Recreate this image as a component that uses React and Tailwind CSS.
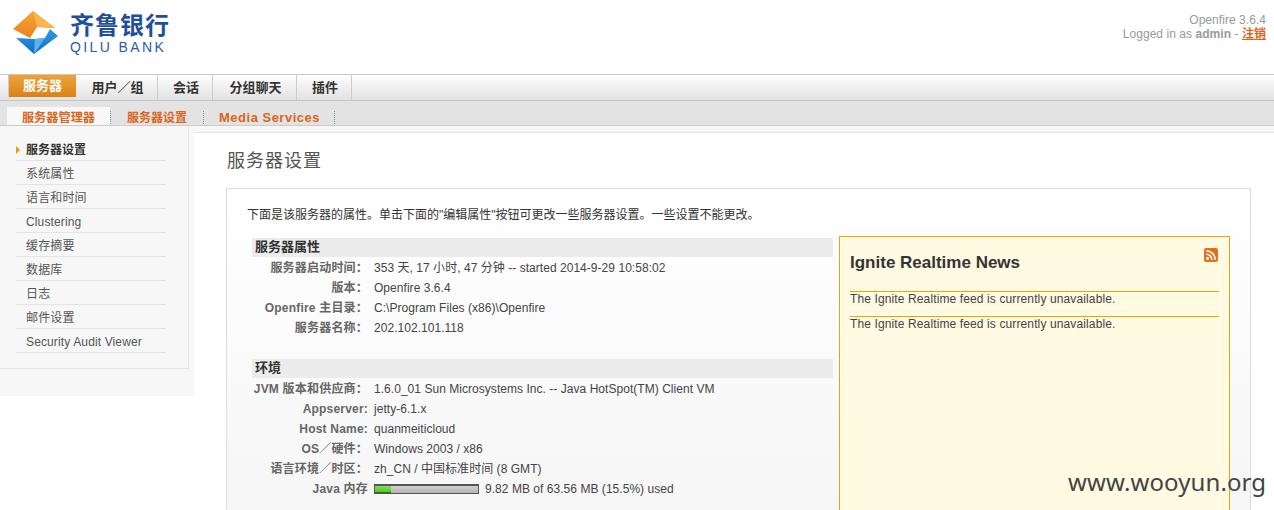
const CJK = { fontFamily: '"Liberation Sans","Noto Sans CJK SC",sans-serif' };

function Logo() {
  return (
    <svg width="46" height="44" viewBox="0 0 46 44" className="shrink-0">
      <defs>
        <linearGradient id="o" x1="0" y1="0" x2="0" y2="1">
          <stop offset="0" stopColor="#f4a93c" />
          <stop offset="1" stopColor="#ec7f1e" />
        </linearGradient>
        <linearGradient id="b" x1="0" y1="0" x2="0" y2="1">
          <stop offset="0" stopColor="#2f9ce6" />
          <stop offset="1" stopColor="#0f6cc0" />
        </linearGradient>
      </defs>
      <path d="M20 0 L42 17 L24 16 L17 27 L0 18 Z" fill="url(#o)" />
      <path d="M20 0 L42 17 L24 16 Z" fill="#f9b54a" />
      <path d="M3 27 L22 28 L32 27 L37 18 L45 25 L21 43 Z" fill="url(#b)" />
      <path d="M22 28 L32 27 L21 43 Z" fill="#56b4ee" />
    </svg>
  );
}

function Rss() {
  return (
    <svg width="14" height="14" viewBox="0 0 14 14" className="-mt-px">
      <rect x="0" y="0" width="14" height="14" rx="2" fill="#e2711d" />
      <circle cx="3.6" cy="10.5" r="1.4" fill="#fff" />
      <path d="M2.4 6.2 A5.4 5.4 0 0 1 7.8 11.8 M2.4 2.9 A8.7 8.7 0 0 1 11.1 11.8" fill="none" stroke="#fff" strokeWidth="1.6" />
    </svg>
  );
}

const tabs = [
  ['用户／组', 'w-[82px]'],
  ['会话', 'w-[55px]'],
  ['分组聊天', 'w-[84px]'],
  ['插件', 'w-[55px]'],
];

const side = ['系统属性', '语言和时间', 'Clustering', '缓存摘要', '数据库', '日志', '邮件设置', 'Security Audit Viewer'];

function Row({ label, children }) {
  return (
    <div className="flex h-5 items-center">
      <div className="w-[116px] shrink-0 text-right font-bold tracking-[0.2px] whitespace-nowrap text-[#666]">{label}</div>
      <div className="ml-1.5 whitespace-nowrap tracking-[0.04px] text-[#444]">{children}</div>
    </div>
  );
}

function SectionHead({ children }) {
  return <div className="mb-px h-[19px] bg-[#ececec] pl-[3px] text-[13px] leading-[18px] font-bold text-[#333]">{children}</div>;
}

export default function App() {
  return (
    <div className="relative h-[510px] w-[1274px] overflow-hidden bg-white text-xs" style={CJK}>
      <header className="flex h-[74px] justify-between">
        <div className="flex pt-[11px] pl-[13px]">
          <Logo />
          <div className="pl-[11px]">
            <div className="text-[24px] leading-[30px] font-bold tracking-[1px] whitespace-nowrap text-[#1f4f9c]">齐鲁银行</div>
            <div className="-mt-[1px] text-[14px] leading-[14px] tracking-[2.4px] whitespace-nowrap text-[#2a5ca8]">QILU BANK</div>
          </div>
        </div>
        <div className="pt-[13px] pr-2 text-right leading-[14px] tracking-[0.05px] text-[#999]">
          <div>Openfire 3.6.4</div>
          <div>
            Logged in as <b>admin</b> - <a className="font-bold text-[#d9661c] underline">注销</a>
          </div>
        </div>
      </header>

      <nav className="flex h-[27px] border-y border-y-[#c6c6c6] bg-gradient-to-b from-[#fefefe] to-[#e2e2e2] pl-2">
        <div className="flex h-[22px] w-[68px] items-center justify-center border-l border-l-[#ccc] bg-gradient-to-b from-[#eca43a] to-[#da8214] text-[13px] font-bold text-white">服务器</div>
        {tabs.map(([t, w]) => (
          <div key={t} className={`flex h-[25px] items-center justify-center border-r border-r-[#ccc] pl-[2px] text-[13px] font-bold text-[#333] ${w}`}>{t}</div>
        ))}
      </nav>

      <div className="flex h-[25px] items-end border-b border-b-[#ccc] bg-[#e3e3e3] pl-[7px] text-[13px] font-bold text-[#d9661c]">
        <div className="flex h-[18px] w-[103px] items-center justify-center bg-[#f8f8f8] pt-[4px] text-[12.2px]">服务器管理器</div>
        <div className="mb-px flex h-[13px] w-[93px] items-center justify-center border-l border-dotted border-l-[#6f9aa0] text-xs">服务器设置</div>
        <div className="mb-px flex h-[13px] w-[132px] items-center justify-center border-x border-dotted border-x-[#6f9aa0] pl-px tracking-[0.5px]">Media Services</div>
      </div>

      <div className="flex h-[384px]">
        <aside className="h-[270px] w-[194px] shrink-0 bg-[#f7f7f7]">
          <div className="h-[243px] w-[189px] border-r border-b border-[#e3e3e3] pt-[11px] pl-4">
            <div className="relative flex h-6 w-[150px] items-center border-b border-b-[#e3e3e3] pt-[2px] pl-2.5 font-bold text-[#333]">
              <span className="absolute left-0 h-0 w-0 border-y-[4px] border-l-[4px] border-y-transparent border-l-[#dda20e]" />
              服务器设置
            </div>
            {side.map((s) => (
              <div key={s} className="flex h-6 w-[150px] items-center border-b border-b-[#e3e3e3] pt-[2px] pl-2.5 tracking-[0.13px] text-[#555]">{s}</div>
            ))}
          </div>
        </aside>

        <main className="min-w-0 flex-1">
          <div className="h-[7px] border-b border-b-[#e6e6e6] bg-[#f7f7f7]" />
          <div className="h-[55px] pl-[33px] text-[18px] leading-[56px] tracking-[1px] text-[#555]">服务器设置</div>
          <div className="ml-8 h-[400px] w-[1025px] border border-[#ddd] bg-gradient-to-b from-white to-[#f4f4f4] pt-[17px] pl-[19px]">
            <p className="h-[30px] pl-px leading-[18px] text-[#333]">下面是该服务器的属性。单击下面的"编辑属性"按钮可更改一些服务器设置。一些设置不能更改。</p>
            <div className="flex">
              <div className="ml-1.5 w-[581px] pt-[2px]">
                <SectionHead>服务器属性</SectionHead>
                <Row label="服务器启动时间：">353 天, 17 小时, 47 分钟 -- started 2014-9-29 10:58:02</Row>
                <Row label="版本：">Openfire 3.6.4</Row>
                <Row label="Openfire 主目录：">C:\Program Files (x86)\Openfire</Row>
                <Row label="服务器名称：">202.102.101.118</Row>
                <div className="h-[21px]" />
                <SectionHead>环境</SectionHead>
                <Row label="JVM 版本和供应商：">1.6.0_01 Sun Microsystems Inc. -- Java HotSpot(TM) Client VM</Row>
                <Row label="Appserver:">jetty-6.1.x</Row>
                <Row label="Host Name:">quanmeiticloud</Row>
                <Row label="OS／硬件：">Windows 2003 / x86</Row>
                <Row label="语言环境／时区：">zh_CN / 中国标准时间 (8 GMT)</Row>
                <Row label="Java 内存">
                  <div className="flex items-center">
                    <div className="mr-1.5 h-[10px] w-[105px] border border-t-2 border-[#555] bg-gradient-to-b from-[#d0d0ce] to-[#b4b4b2]">
                      <div className="h-full w-[16px] border-b border-b-[#2f6e1f] bg-gradient-to-b from-[#7fe44e] to-[#56c42e]" />
                    </div>
                    9.82 MB of 63.56 MB (15.5%) used
                  </div>
                </Row>
              </div>
              <div className="ml-[6px] h-[300px] w-[391px] border border-[#e5a50c] bg-[#fffae1] px-2.5 pt-[12px]">
                <div className="flex h-[42px] justify-between pr-[1px]">
                  <h2 className="pt-[4px] text-[17px] leading-[20px] font-bold text-[#333]">Ignite Realtime News</h2>
                  <Rss />
                </div>
                <div className="h-[25px] border-t border-t-[#e5a50c] leading-[14px] tracking-[0.12px] text-[#444]">The Ignite Realtime feed is currently unavailable.</div>
                <div className="h-[25px] border-t border-t-[#e5a50c] leading-[14px] tracking-[0.12px] text-[#444]">The Ignite Realtime feed is currently unavailable.</div>
              </div>
            </div>
          </div>
        </main>
      </div>

      <div className="absolute top-[466px] left-[1068px] text-[24px] leading-[32px] tracking-[0.1px] whitespace-nowrap text-[#444]" style={{ fontFamily: '"Noto Sans",sans-serif' }}>www.wooyun.org</div>
    </div>
  );
}
